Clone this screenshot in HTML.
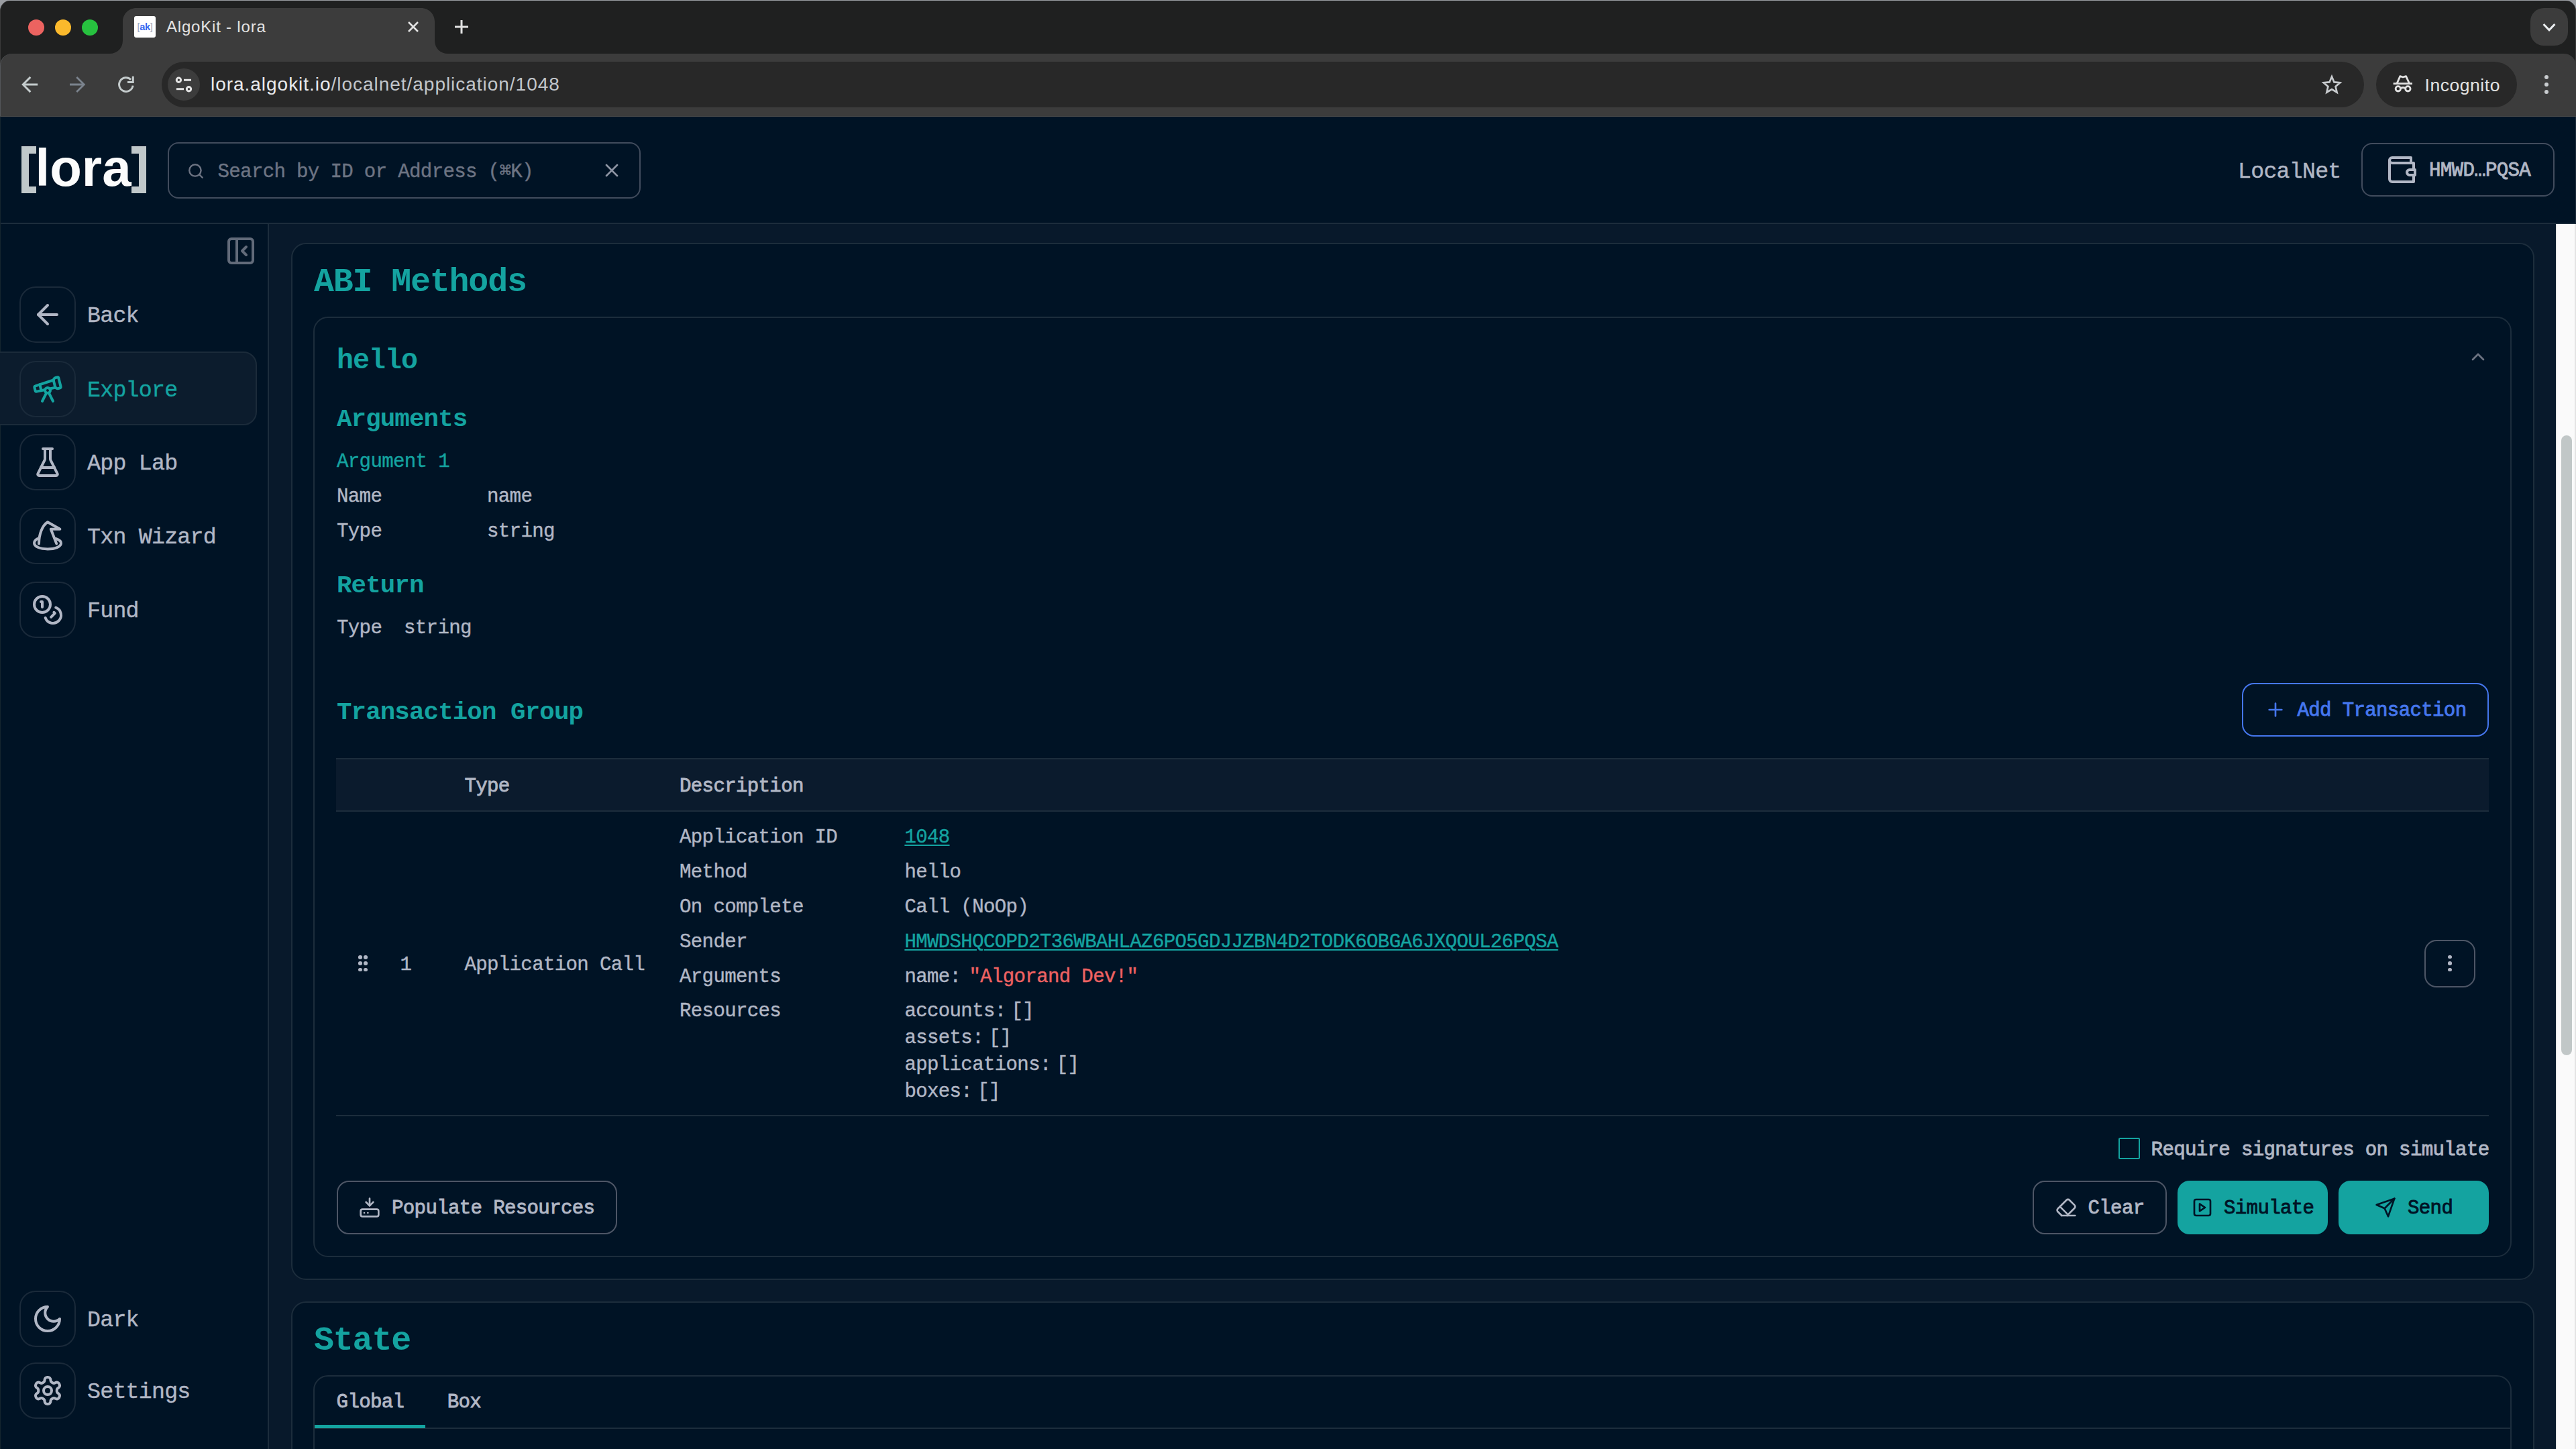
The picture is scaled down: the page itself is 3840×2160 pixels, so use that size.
<!DOCTYPE html>
<html lang="en"><head><meta charset="utf-8"><title>AlgoKit - lora</title>
<style>
html,body{margin:0;padding:0;}
body{width:3840px;height:2160px;overflow:hidden;background:#001325;position:relative;}
.b{position:absolute;box-sizing:border-box;display:block;}
.m{position:absolute;font-family:"Liberation Mono",monospace;line-height:1;white-space:pre;}
.s{position:absolute;font-family:"Liberation Sans",sans-serif;line-height:1;white-space:pre;}
.u{text-decoration:underline;text-decoration-thickness:2px;text-underline-offset:2.5px;}
</style></head><body>
<div class="b" style="left:0px;top:0px;width:3840px;height:40px;background:#9a9da2;"></div>
<div class="b" style="left:0px;top:1.2px;width:3840px;height:98.8px;background:#1f2020;border-radius:15px 15px 0 0;border-left:1px solid #3a3a3a;border-right:1px solid #3a3a3a;"></div>
<div class="b" style="left:42px;top:28.5px;width:24px;height:24.0px;border-radius:50%;background:#ec6360;"></div>
<div class="b" style="left:82px;top:28.5px;width:24px;height:24.0px;border-radius:50%;background:#fbb92c;"></div>
<div class="b" style="left:122px;top:28.5px;width:24px;height:24.0px;border-radius:50%;background:#27c13f;"></div>
<svg class="b" style="left:163px;top:12px" width="505" height="68" viewBox="0 0 505 68"><path d="M0 68 C12 68 20 60 20 48 L20 20 C20 9 29 0 40 0 L465 0 C476 0 485 9 485 20 L485 48 C485 60 493 68 505 68 Z" fill="#3c3c3c"/></svg>
<div class="b" style="left:200px;top:24px;width:32px;height:32px;background:#fff;border-radius:3px;"></div>
<div class="s" style="left:200px;top:32.5px;width:32px;text-align:center;font-size:14.5px;font-weight:700;color:#3567f0;letter-spacing:-0.3px"><span style="color:#9aa4b5;font-weight:400">[</span>ak<span style="color:#9aa4b5;font-weight:400">]</span></div>
<div class="s" style="left:248px;top:27.7px;font-size:24px;color:#e3e3e3;letter-spacing:0.8px;">AlgoKit - lora</div>
<svg class="b" style="left:606px;top:30px" width="20" height="20" viewBox="0 0 20 20" stroke="#e3e3e3" stroke-width="2.6" fill="none"><path d="M3 3 17 17M17 3 3 17"/></svg>
<svg class="b" style="left:676px;top:28px" width="24" height="24" viewBox="0 0 24 24" stroke="#e3e3e3" stroke-width="3" fill="none"><path d="M12 2V22M2 12H22"/></svg>
<div class="b" style="left:3772px;top:12px;width:56px;height:56px;background:#3c3c3c;border-radius:20px;"></div>
<svg class="b" style="left:3788px;top:31px" width="24" height="20" viewBox="0 0 24 20" stroke="#eceff1" stroke-width="3" fill="none" stroke-linejoin="miter"><path d="M3.6 5 12 13.8 20.4 5"/></svg>
<div class="b" style="left:0px;top:80px;width:3840px;height:93px;background:#3c3c3c;border-radius:18px 18px 0 0;border-left:1px solid #53565a;"></div>
<div class="b" style="left:0px;top:172.7px;width:3840px;height:1.3000000000000114px;background:#494a4a;"></div>
<svg class="b" style="left:28px;top:110px" width="32" height="32" viewBox="0 0 32 32" stroke="#c4cbcc" stroke-width="3" fill="none"><path d="M28.2 16H6.5M17.4 4.9 6.3 16 17.4 27.1"/></svg>
<svg class="b" style="left:99px;top:110px" width="32" height="32" viewBox="0 0 32 32" stroke="#7b838d" stroke-width="2.8" fill="none"><path d="M5 16H26.2M15.2 4.9 26.3 16 15.2 27.1"/></svg>
<svg class="b" style="left:172px;top:110px" width="32" height="32" viewBox="0 0 32 32" stroke="#c4cbcc" stroke-width="3" fill="none"><path d="M23.1 8.7A10.3 10.3 0 1 0 26.1 17.6"/><path d="M26.3 3.8V12.4H18"/></svg>
<div class="b" style="left:241px;top:92px;width:3283px;height:68px;background:#282828;border-radius:34px;"></div>
<div class="b" style="left:250px;top:102px;width:48px;height:48px;background:#3c3c3c;border-radius:50%;"></div>
<svg class="b" style="left:258px;top:110px" width="32" height="32" viewBox="0 0 32 32" stroke="#e3e3e3" stroke-width="3" fill="none"><circle cx="8.4" cy="9.3" r="3.2"/><path d="M16 9.3H27"/><circle cx="23.5" cy="22.7" r="3.2"/><path d="M4.9 22.7H16"/></svg>
<div class="s" style="left:314px;top:112.1px;font-size:28px;letter-spacing:0.97px;color:#e8eaed">lora.algokit.io<span style="color:#c2c6cb">/localnet/application/1048</span></div>
<svg class="b" style="left:3460px;top:109.5px" width="32" height="32" viewBox="0 0 24 24" stroke="#c9cccf" stroke-width="2" fill="none" stroke-linejoin="miter"><path d="M12 3.2l2.6 6.1 6.6.6-5 4.4 1.5 6.5L12 17.3 6.3 20.8l1.5-6.5-5-4.4 6.6-.6z"/></svg>
<div class="b" style="left:3541.5px;top:92px;width:210.5px;height:68px;background:#282828;border-radius:34px;"></div>
<svg class="b" style="left:3566px;top:110px" width="32" height="32" viewBox="0 0 32 32" stroke="#e3e3e3" stroke-width="2.8" fill="none" stroke-linejoin="round"><path d="M1.6 14.6H30"/><path d="M7 14.5 11.8 3.6 16 5 20.6 3.6 25.6 14.5"/><circle cx="8.8" cy="22.3" r="3.7"/><circle cx="23.4" cy="22.3" r="3.7"/><path d="M12.4 21.6Q16 19.4 19.8 21.6"/></svg>
<div class="s" style="left:3614.5px;top:113.6px;font-size:26.5px;color:#e3e3e3;letter-spacing:0.55px;">Incognito</div>
<div class="b" style="left:3792.8px;top:111.7px;width:6.399999999999636px;height:6.400000000000006px;background:#c9cccf;border-radius:50%;"></div>
<div class="b" style="left:3792.8px;top:122.8px;width:6.399999999999636px;height:6.3999999999999915px;background:#c9cccf;border-radius:50%;"></div>
<div class="b" style="left:3792.8px;top:133.9px;width:6.399999999999636px;height:6.399999999999977px;background:#c9cccf;border-radius:50%;"></div>
<div class="b" style="left:0px;top:174px;width:3840px;height:160px;background:#001325;border-bottom:2px solid #1c2d3c;"></div>
<div class="b" style="left:32px;top:218px;width:10.700000000000003px;height:70px;background:#c0c8ca;"></div>
<div class="b" style="left:32px;top:218px;width:21.700000000000003px;height:10.5px;background:#c0c8ca;"></div>
<div class="b" style="left:32px;top:277.5px;width:21.700000000000003px;height:10.5px;background:#c0c8ca;"></div>
<div class="b" style="left:207.3px;top:218px;width:10.699999999999989px;height:70px;background:#c0c8ca;"></div>
<div class="b" style="left:196px;top:218px;width:22px;height:10.5px;background:#c0c8ca;"></div>
<div class="b" style="left:196px;top:277.5px;width:22px;height:10.5px;background:#c0c8ca;"></div>
<div class="s" style="left:52.5px;top:211.3px;font-size:78px;font-weight:700;color:#fcfcfc;letter-spacing:0px">lora</div>
<div class="b" style="left:250px;top:212px;width:704.5px;height:84px;border:2px solid #414c5d;border-radius:16px;"></div>
<svg class="b" style="left:278.5px;top:241.5px;" width="26" height="26" viewBox="0 0 24 24" fill="none" stroke="#6d7483" stroke-width="2.2" stroke-linecap="round" stroke-linejoin="round"><circle cx="11" cy="11" r="8"/><path d="m21 21-4.3-4.3"/></svg>
<div class="m " style="left:324.5px;top:241.7px;font-size:29.12px;letter-spacing:-0.672px;color:#6d7483;-webkit-text-stroke:0.4px;">Search by ID or Address (⌘K)</div>
<svg class="b" style="left:896px;top:238.3px;" width="32" height="32" viewBox="0 0 24 24" fill="none" stroke="#8d94a3" stroke-width="2" stroke-linecap="round" stroke-linejoin="round"><path d="M18 6 6 18"/><path d="m6 6 12 12"/></svg>
<div class="m " style="left:3336px;top:240.0px;font-size:33.28px;letter-spacing:-0.768px;color:#b1b7c5;-webkit-text-stroke:0.4px;">LocalNet</div>
<div class="b" style="left:3520px;top:213px;width:288px;height:79.5px;border:2px solid #414c5d;border-radius:16px;"></div>
<svg class="b" style="left:3556px;top:229px;" width="48" height="48" viewBox="0 0 24 24" fill="none" stroke="#b1b7c5" stroke-width="2" stroke-linecap="round" stroke-linejoin="round"><path d="M21 12V7H5a2 2 0 0 1 0-4h14v4"/><path d="M3 5v14a2 2 0 0 0 2 2h16v-5"/><path d="M18 12a2 2 0 0 0 0 4h4v-4Z"/></svg>
<div class="m " style="left:3621px;top:240.1px;font-size:29.12px;letter-spacing:-0.672px;color:#b1b7c5;-webkit-text-stroke:0.85px;">HMWD…PQSA</div>
<div class="b" style="left:3839px;top:174px;width:1px;height:160px;background:#1b2b3b;"></div>
<div class="b" style="left:0px;top:174px;width:1px;height:160px;background:#15252f;"></div>
<div class="b" style="left:0px;top:334px;width:401px;height:1826px;background:#001325;border-right:2px solid #1c2d3c;border-left:1px solid #15252f;"></div>
<svg class="b" style="left:335px;top:350px;" width="48" height="48" viewBox="0 0 24 24" fill="none" stroke="#626b7a" stroke-width="2" stroke-linecap="round" stroke-linejoin="round"><rect width="18" height="18" x="3" y="3" rx="2"/><path d="M9 3v18"/><path d="m16 15-3-3 3-3"/></svg>
<div class="b" style="left:-4px;top:524px;width:387px;height:110px;background:#0c1c2d;border:2px solid #1b2b3a;border-radius:0 20px 20px 0;"></div>
<div class="b" style="left:29px;top:427px;width:84px;height:84px;border:2px solid #1a2a3a;border-radius:24px;"></div>
<svg class="b" style="left:47px;top:445px;" width="48" height="48" viewBox="0 0 24 24" fill="none" stroke="#b1b7c5" stroke-width="2" stroke-linecap="round" stroke-linejoin="round"><path d="m12 19-7-7 7-7"/><path d="M19 12H5"/></svg>
<div class="m " style="left:130px;top:455.0px;font-size:33.28px;letter-spacing:-0.768px;color:#b1b7c5;-webkit-text-stroke:0.4px;">Back</div>
<div class="b" style="left:29px;top:537.5px;width:84px;height:84.0px;border:2px solid #1a2a3a;border-radius:24px;"></div>
<svg class="b" style="left:47px;top:555.5px;" width="48" height="48" viewBox="0 0 24 24" fill="none" stroke="#14a3a0" stroke-width="2" stroke-linecap="round" stroke-linejoin="round"><path d="m10.065 12.493-6.18 1.318a.934.934 0 0 1-1.108-.702l-.537-2.15a1.07 1.07 0 0 1 .691-1.265l13.504-4.44"/><path d="m13.56 11.747 4.332-.924"/><path d="m16 21-3.105-6.21"/><path d="M16.485 5.94a2 2 0 0 1 1.455-2.425l1.09-.272a1 1 0 0 1 1.212.727l1.515 6.06a1 1 0 0 1-.727 1.213l-1.09.272a2 2 0 0 1-2.425-1.455z"/><path d="m6.158 8.633 1.114 4.456"/><path d="m8 21 3.105-6.21"/><circle cx="12" cy="13" r="2"/></svg>
<div class="m " style="left:130px;top:565.5px;font-size:33.28px;letter-spacing:-0.768px;color:#14a3a0;-webkit-text-stroke:0.4px;">Explore</div>
<div class="b" style="left:29px;top:646.6px;width:84px;height:84.0px;border:2px solid #1a2a3a;border-radius:24px;"></div>
<svg class="b" style="left:47px;top:664.6px;" width="48" height="48" viewBox="0 0 24 24" fill="none" stroke="#b1b7c5" stroke-width="2" stroke-linecap="round" stroke-linejoin="round"><path d="M10 2v7.527a2 2 0 0 1-.211.896L4.72 20.55a1 1 0 0 0 .9 1.45h12.76a1 1 0 0 0 .9-1.45l-5.069-10.127A2 2 0 0 1 14 9.527V2"/><path d="M8.5 2h7"/><path d="M7 16h10"/></svg>
<div class="m " style="left:130px;top:674.6px;font-size:33.28px;letter-spacing:-0.768px;color:#b1b7c5;-webkit-text-stroke:0.4px;">App Lab</div>
<div class="b" style="left:29px;top:756.6px;width:84px;height:84.0px;border:2px solid #1a2a3a;border-radius:24px;"></div>
<svg class="b" style="left:47px;top:774.6px;" width="48" height="48" viewBox="0 0 24 24" fill="none" stroke="#b1b7c5" stroke-width="2" stroke-linecap="round" stroke-linejoin="round"><path d="M5.5 17.7C5.5 11 8 4 12 1.6L21.2 6.9H14.4L18.6 17.7"/><path d="M4.5 14C3 14.800 2 16 2 17.300 2 20 6.500 21.700 12 21.700S22 20 22 17.400C22 16 20.500 14.800 18.100 14"/></svg>
<div class="m " style="left:130px;top:784.6px;font-size:33.28px;letter-spacing:-0.768px;color:#b1b7c5;-webkit-text-stroke:0.4px;">Txn Wizard</div>
<div class="b" style="left:29px;top:866.5px;width:84px;height:84.0px;border:2px solid #1a2a3a;border-radius:24px;"></div>
<svg class="b" style="left:47px;top:884.5px;" width="48" height="48" viewBox="0 0 24 24" fill="none" stroke="#b1b7c5" stroke-width="2" stroke-linecap="round" stroke-linejoin="round"><circle cx="8" cy="8" r="6"/><path d="M18.09 10.37A6 6 0 1 1 10.34 18"/><path d="M7 6h1v4"/><path d="m16.71 13.88.7.71-2.82 2.82"/></svg>
<div class="m " style="left:130px;top:894.5px;font-size:33.28px;letter-spacing:-0.768px;color:#b1b7c5;-webkit-text-stroke:0.4px;">Fund</div>
<div class="b" style="left:29px;top:1923.6px;width:84px;height:84.0px;border:2px solid #1a2a3a;border-radius:24px;"></div>
<svg class="b" style="left:47px;top:1941.6px;" width="48" height="48" viewBox="0 0 24 24" fill="none" stroke="#b1b7c5" stroke-width="2" stroke-linecap="round" stroke-linejoin="round"><path d="M12 3a6 6 0 0 0 9 9 9 9 0 1 1-9-9Z"/></svg>
<div class="m " style="left:130px;top:1951.6px;font-size:33.28px;letter-spacing:-0.768px;color:#b1b7c5;-webkit-text-stroke:0.4px;">Dark</div>
<div class="b" style="left:29px;top:2030.8px;width:84px;height:84.00000000000023px;border:2px solid #1a2a3a;border-radius:24px;"></div>
<svg class="b" style="left:47px;top:2048.8px;" width="48" height="48" viewBox="0 0 24 24" fill="none" stroke="#b1b7c5" stroke-width="2" stroke-linecap="round" stroke-linejoin="round"><path d="M12.22 2h-.44a2 2 0 0 0-2 2v.18a2 2 0 0 1-1 1.73l-.43.25a2 2 0 0 1-2 0l-.15-.08a2 2 0 0 0-2.73.73l-.22.38a2 2 0 0 0 .73 2.73l.15.1a2 2 0 0 1 1 1.72v.51a2 2 0 0 1-1 1.74l-.15.09a2 2 0 0 0-.73 2.73l.22.38a2 2 0 0 0 2.73.73l.15-.08a2 2 0 0 1 2 0l.43.25a2 2 0 0 1 1 1.73V20a2 2 0 0 0 2 2h.44a2 2 0 0 0 2-2v-.18a2 2 0 0 1 1-1.73l.43-.25a2 2 0 0 1 2 0l.15.08a2 2 0 0 0 2.73-.73l.22-.39a2 2 0 0 0-.73-2.73l-.15-.08a2 2 0 0 1-1-1.74v-.5a2 2 0 0 1 1-1.74l.15-.09a2 2 0 0 0 .73-2.73l-.22-.38a2 2 0 0 0-2.73-.73l-.15.08a2 2 0 0 1-2 0l-.43-.25a2 2 0 0 1-1-1.73V4a2 2 0 0 0-2-2z"/><circle cx="12" cy="12" r="3"/></svg>
<div class="m " style="left:130px;top:2058.8px;font-size:33.28px;letter-spacing:-0.768px;color:#b1b7c5;-webkit-text-stroke:0.4px;">Settings</div>
<div class="b" style="left:401px;top:334px;width:3409px;height:1826px;background:#08192b;"></div>
<div class="b" style="left:3810px;top:334px;width:30px;height:1826px;background:#fafafa;border-left:2px solid #e9e9e9;border-right:2px solid #e3e3e3;"></div>
<div class="b" style="left:3818px;top:648.7px;width:16px;height:924.0px;background:#c1c7c7;border-radius:8px;"></div>
<div class="b" style="left:434px;top:362px;width:3344px;height:1546px;background:#001325;border:2px solid #1c2d3c;border-radius:22px;"></div>
<div class="m " style="left:468px;top:395.7px;font-size:49.92px;letter-spacing:-1.152px;color:#14a3a0;font-weight:700;">ABI Methods</div>
<div class="b" style="left:467px;top:472px;width:3277px;height:1402px;background:#001325;border:2px solid #1c2d3c;border-radius:22px;"></div>
<div class="m " style="left:502px;top:516.8px;font-size:41.60px;letter-spacing:-0.960px;color:#14a3a0;font-weight:700;">hello</div>
<svg class="b" style="left:3678px;top:516px;" width="32" height="32" viewBox="0 0 24 24" fill="none" stroke="#6d7483" stroke-width="2" stroke-linecap="round" stroke-linejoin="round"><path d="m18 15-6-6-6 6"/></svg>
<div class="m " style="left:502px;top:606.9px;font-size:37.44px;letter-spacing:-0.864px;color:#14a3a0;font-weight:700;">Arguments</div>
<div class="m " style="left:502px;top:673.7px;font-size:29.12px;letter-spacing:-0.672px;color:#14a3a0;-webkit-text-stroke:0.4px;">Argument 1</div>
<div class="m " style="left:502px;top:725.7px;font-size:29.12px;letter-spacing:-0.672px;color:#b1b7c5;-webkit-text-stroke:0.4px;">Name</div>
<div class="m " style="left:726px;top:725.7px;font-size:29.12px;letter-spacing:-0.672px;color:#b1b7c5;-webkit-text-stroke:0.4px;">name</div>
<div class="m " style="left:502px;top:777.7px;font-size:29.12px;letter-spacing:-0.672px;color:#b1b7c5;-webkit-text-stroke:0.4px;">Type</div>
<div class="m " style="left:726px;top:777.7px;font-size:29.12px;letter-spacing:-0.672px;color:#b1b7c5;-webkit-text-stroke:0.4px;">string</div>
<div class="m " style="left:502px;top:855.3px;font-size:37.44px;letter-spacing:-0.864px;color:#14a3a0;font-weight:700;">Return</div>
<div class="m " style="left:502px;top:921.7px;font-size:29.12px;letter-spacing:-0.672px;color:#b1b7c5;-webkit-text-stroke:0.4px;">Type</div>
<div class="m " style="left:602px;top:921.7px;font-size:29.12px;letter-spacing:-0.672px;color:#b1b7c5;-webkit-text-stroke:0.4px;">string</div>
<div class="m " style="left:502px;top:1044.0px;font-size:37.44px;letter-spacing:-0.864px;color:#14a3a0;font-weight:700;">Transaction Group</div>
<div class="b" style="left:3342px;top:1018px;width:368px;height:79.5px;border:2px solid #4577ee;border-radius:18px;"></div>
<svg class="b" style="left:3376px;top:1042px;" width="32" height="32" viewBox="0 0 24 24" fill="none" stroke="#4577ee" stroke-width="2" stroke-linecap="round" stroke-linejoin="round"><path d="M5 12h14"/><path d="M12 5v14"/></svg>
<div class="m " style="left:3424.5px;top:1045.2px;font-size:29.12px;letter-spacing:-0.672px;color:#4577ee;-webkit-text-stroke:0.85px;">Add Transaction</div>
<div class="b" style="left:501px;top:1130px;width:3209px;height:80px;background:#0b1b2d;border-top:2px solid #1c2d3c;border-bottom:2px solid #1c2d3c;"></div>
<div class="m " style="left:692.4px;top:1157.7px;font-size:29.12px;letter-spacing:-0.672px;color:#b1b7c5;-webkit-text-stroke:0.85px;">Type</div>
<div class="m " style="left:1013px;top:1157.7px;font-size:29.12px;letter-spacing:-0.672px;color:#b1b7c5;-webkit-text-stroke:0.85px;">Description</div>
<div class="m " style="left:1013px;top:1233.7px;font-size:29.12px;letter-spacing:-0.672px;color:#b1b7c5;-webkit-text-stroke:0.4px;">Application ID</div>
<div class="m " style="left:1013px;top:1285.7px;font-size:29.12px;letter-spacing:-0.672px;color:#b1b7c5;-webkit-text-stroke:0.4px;">Method</div>
<div class="m " style="left:1013px;top:1337.7px;font-size:29.12px;letter-spacing:-0.672px;color:#b1b7c5;-webkit-text-stroke:0.4px;">On complete</div>
<div class="m " style="left:1013px;top:1389.7px;font-size:29.12px;letter-spacing:-0.672px;color:#b1b7c5;-webkit-text-stroke:0.4px;">Sender</div>
<div class="m " style="left:1013px;top:1441.7px;font-size:29.12px;letter-spacing:-0.672px;color:#b1b7c5;-webkit-text-stroke:0.4px;">Arguments</div>
<div class="m " style="left:1013px;top:1493.2px;font-size:29.12px;letter-spacing:-0.672px;color:#b1b7c5;-webkit-text-stroke:0.4px;">Resources</div>
<div class="m u" style="left:1348.4px;top:1233.7px;font-size:29.12px;letter-spacing:-0.672px;color:#14a3a0;-webkit-text-stroke:0.4px;">1048</div>
<div class="m " style="left:1348.4px;top:1285.7px;font-size:29.12px;letter-spacing:-0.672px;color:#b1b7c5;-webkit-text-stroke:0.4px;">hello</div>
<div class="m " style="left:1348.4px;top:1337.7px;font-size:29.12px;letter-spacing:-0.672px;color:#b1b7c5;-webkit-text-stroke:0.4px;">Call (NoOp)</div>
<div class="m u" style="left:1348.4px;top:1389.7px;font-size:29.12px;letter-spacing:-0.672px;color:#14a3a0;-webkit-text-stroke:0.4px;">HMWDSHQCOPD2T36WBAHLAZ6PO5GDJJZBN4D2TODK6OBGA6JXQOUL26PQSA</div>
<div class="m " style="left:1348.4px;top:1441.7px;font-size:29.12px;letter-spacing:-0.672px;color:#b1b7c5;-webkit-text-stroke:0.4px;">name:<span style="color:#ee6262;margin-left:12px">"Algorand Dev!"</span></div>
<div class="m " style="left:1348.4px;top:1493.2px;font-size:29.12px;letter-spacing:-0.672px;color:#b1b7c5;-webkit-text-stroke:0.4px;">accounts:<span style="margin-left:8px">[]</span></div>
<div class="m " style="left:1348.4px;top:1533.2px;font-size:29.12px;letter-spacing:-0.672px;color:#b1b7c5;-webkit-text-stroke:0.4px;">assets:<span style="margin-left:8px">[]</span></div>
<div class="m " style="left:1348.4px;top:1573.2px;font-size:29.12px;letter-spacing:-0.672px;color:#b1b7c5;-webkit-text-stroke:0.4px;">applications:<span style="margin-left:8px">[]</span></div>
<div class="m " style="left:1348.4px;top:1613.2px;font-size:29.12px;letter-spacing:-0.672px;color:#b1b7c5;-webkit-text-stroke:0.4px;">boxes:<span style="margin-left:8px">[]</span></div>
<div class="b" style="left:534.2px;top:1424.0px;width:5.599999999999909px;height:5.599999999999909px;background:#b1b7c5;border-radius:50%;"></div>
<div class="b" style="left:534.2px;top:1433.3px;width:5.599999999999909px;height:5.599999999999909px;background:#b1b7c5;border-radius:50%;"></div>
<div class="b" style="left:534.2px;top:1442.6px;width:5.599999999999909px;height:5.599999999999909px;background:#b1b7c5;border-radius:50%;"></div>
<div class="b" style="left:542.2px;top:1424.0px;width:5.599999999999909px;height:5.599999999999909px;background:#b1b7c5;border-radius:50%;"></div>
<div class="b" style="left:542.2px;top:1433.3px;width:5.599999999999909px;height:5.599999999999909px;background:#b1b7c5;border-radius:50%;"></div>
<div class="b" style="left:542.2px;top:1442.6px;width:5.599999999999909px;height:5.599999999999909px;background:#b1b7c5;border-radius:50%;"></div>
<div class="m " style="left:596.5px;top:1423.5px;font-size:29.12px;letter-spacing:-0.672px;color:#b1b7c5;-webkit-text-stroke:0.4px;">1</div>
<div class="m " style="left:692.4px;top:1423.5px;font-size:29.12px;letter-spacing:-0.672px;color:#b1b7c5;-webkit-text-stroke:0.4px;">Application Call</div>
<div class="b" style="left:3614px;top:1400.5px;width:76px;height:71.0px;border:2px solid #4d5666;border-radius:18px;"></div>
<div class="b" style="left:3649.3px;top:1423.8px;width:5.399999999999636px;height:5.400000000000091px;background:#b1b7c5;border-radius:50%;"></div>
<div class="b" style="left:3649.3px;top:1433.3px;width:5.399999999999636px;height:5.400000000000091px;background:#b1b7c5;border-radius:50%;"></div>
<div class="b" style="left:3649.3px;top:1442.8px;width:5.399999999999636px;height:5.400000000000091px;background:#b1b7c5;border-radius:50%;"></div>
<div class="b" style="left:501px;top:1661.5px;width:3209px;height:2.0px;background:#1c2d3c;"></div>
<div class="b" style="left:3158px;top:1696px;width:32px;height:32px;border:2px solid #14a3a0;border-radius:2px;"></div>
<div class="m " style="left:3206.6px;top:1699.7px;font-size:29.12px;letter-spacing:-0.672px;color:#b1b7c5;-webkit-text-stroke:0.85px;">Require signatures on simulate</div>
<div class="b" style="left:501.5px;top:1760px;width:418.5px;height:80px;border:2px solid #4d5666;border-radius:18px;"></div>
<svg class="b" style="left:535px;top:1784px;" width="32" height="32" viewBox="0 0 24 24" fill="none" stroke="#b1b7c5" stroke-width="2" stroke-linecap="round" stroke-linejoin="round"><path d="M12 2v8"/><path d="m16 6-4 4-4-4"/><rect width="20" height="8" x="2" y="14" rx="2"/><path d="M6 18h.01"/><path d="M10 18h.01"/></svg>
<div class="m " style="left:584px;top:1787.1px;font-size:29.12px;letter-spacing:-0.672px;color:#b1b7c5;-webkit-text-stroke:0.85px;">Populate Resources</div>
<div class="b" style="left:3030px;top:1760px;width:200px;height:80px;border:2px solid #4d5666;border-radius:18px;"></div>
<svg class="b" style="left:3064px;top:1784px;" width="32" height="32" viewBox="0 0 24 24" fill="none" stroke="#b1b7c5" stroke-width="2" stroke-linecap="round" stroke-linejoin="round"><path d="m7 21-4.3-4.3c-1-1-1-2.5 0-3.4l9.6-9.6c1-1 2.5-1 3.4 0l5.6 5.6c1 1 1 2.5 0 3.4L13 21"/><path d="M22 21H7"/><path d="m5 11 9 9"/></svg>
<div class="m " style="left:3112.5px;top:1787.1px;font-size:29.12px;letter-spacing:-0.672px;color:#b1b7c5;-webkit-text-stroke:0.85px;">Clear</div>
<div class="b" style="left:3246px;top:1760px;width:224px;height:80px;background:#14a3a0;border-radius:18px;"></div>
<svg class="b" style="left:3267px;top:1784px;" width="32" height="32" viewBox="0 0 24 24" fill="none" stroke="#001325" stroke-width="2" stroke-linecap="round" stroke-linejoin="round"><rect width="18" height="18" x="3" y="3" rx="2"/><path d="m9 8 6 4-6 4Z"/></svg>
<div class="m " style="left:3315px;top:1787.1px;font-size:29.12px;letter-spacing:-0.672px;color:#001325;-webkit-text-stroke:0.85px;">Simulate</div>
<div class="b" style="left:3486px;top:1760px;width:224px;height:80px;background:#14a3a0;border-radius:18px;"></div>
<svg class="b" style="left:3540px;top:1784px;" width="32" height="32" viewBox="0 0 24 24" fill="none" stroke="#001325" stroke-width="2" stroke-linecap="round" stroke-linejoin="round"><path d="m22 2-7 20-4-9-9-4Z"/><path d="M22 2 11 13"/></svg>
<div class="m " style="left:3589px;top:1787.1px;font-size:29.12px;letter-spacing:-0.672px;color:#001325;-webkit-text-stroke:0.85px;">Send</div>
<div class="b" style="left:434px;top:1940px;width:3344px;height:320px;background:#001325;border:2px solid #1c2d3c;border-radius:22px;"></div>
<div class="m " style="left:468px;top:1973.7px;font-size:49.92px;letter-spacing:-1.152px;color:#14a3a0;font-weight:700;">State</div>
<div class="b" style="left:467px;top:2050px;width:3277px;height:250px;background:#001325;border:2px solid #1c2d3c;border-radius:22px;"></div>
<div class="m " style="left:501.6px;top:2075.7px;font-size:29.12px;letter-spacing:-0.672px;color:#b1b7c5;-webkit-text-stroke:0.85px;">Global</div>
<div class="m " style="left:666.7px;top:2075.7px;font-size:29.12px;letter-spacing:-0.672px;color:#b1b7c5;-webkit-text-stroke:0.85px;">Box</div>
<div class="b" style="left:469px;top:2128px;width:3273px;height:2px;background:#1c2d3c;"></div>
<div class="b" style="left:469px;top:2124px;width:165px;height:4.5px;background:#14a3a0;"></div>
</body></html>
